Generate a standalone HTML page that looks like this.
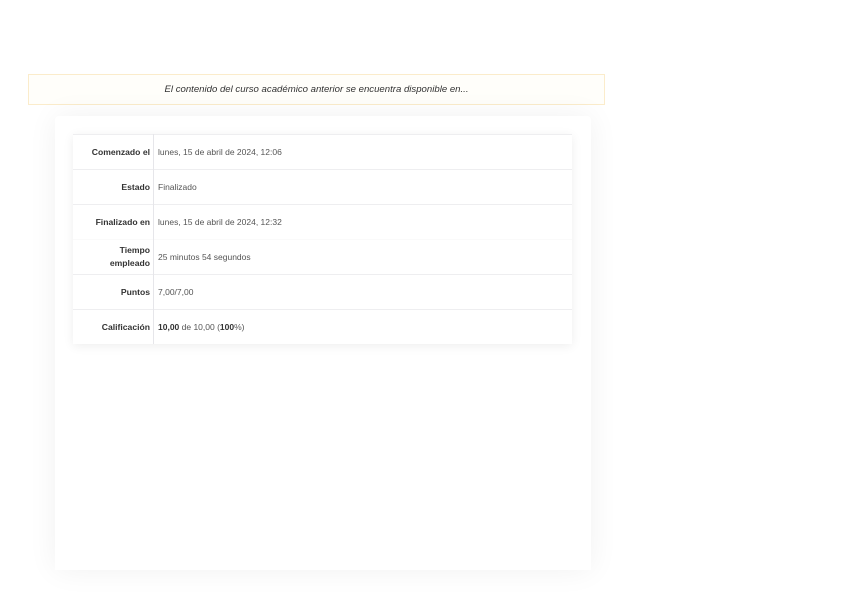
<!DOCTYPE html>
<html><head><meta charset="utf-8"><style>
body{margin:0;width:848px;height:599px;background:#fff;font-family:"Liberation Sans",sans-serif;position:relative;overflow:hidden}
.banner{position:absolute;left:28px;top:74px;width:575px;height:29px;border:1px solid #fbeccb;background:#fffefa;text-align:center;font-size:9.6px;font-style:italic;color:#333;line-height:29px}
.card{position:absolute;left:55px;top:116px;width:536px;height:454px;background:#fff;box-shadow:0 0 30px rgba(0,0,0,0.06);border-radius:4px 4px 0 0}
table{position:absolute;left:18px;top:18px;width:499px;border-collapse:collapse;box-shadow:0 2px 10px rgba(0,0,0,0.07);font-size:8.5px;color:#555}
td,th{height:34px;border-top:1px solid #eeeef0;padding:0;vertical-align:middle}
th{width:77px;text-align:right;padding-right:3px;font-size:8.6px;font-weight:bold;color:#333;border-right:1px solid #e6e6ea;line-height:13px}
td{padding-left:4px}
tr.nb th,tr.nb td{border-top:1px solid #fafafa}
</style></head><body>
<div class="banner">El contenido del curso académico anterior se encuentra disponible en...</div>
<div class="card">
<table>
<tr><th>Comenzado el</th><td>lunes, 15 de abril de 2024, 12:06</td></tr>
<tr><th>Estado</th><td>Finalizado</td></tr>
<tr><th>Finalizado en</th><td>lunes, 15 de abril de 2024, 12:32</td></tr>
<tr class="nb"><th>Tiempo<br>empleado</th><td>25 minutos 54 segundos</td></tr>
<tr><th>Puntos</th><td>7,00/7,00</td></tr>
<tr><th>Calificación</th><td><b style="color:#333">10,00</b> de 10,00 (<b style="color:#333">100</b>%)</td></tr>
</table>
</div>
</body></html>
